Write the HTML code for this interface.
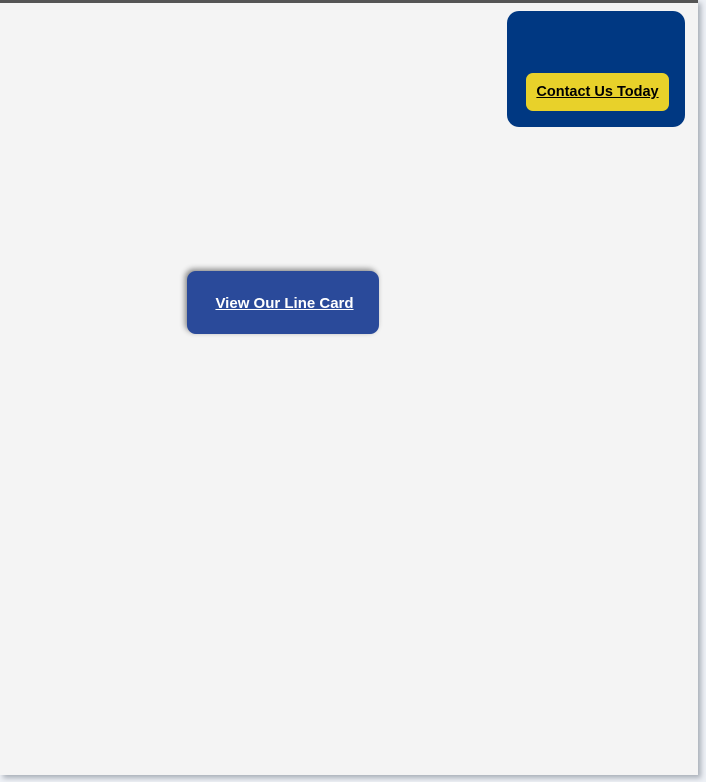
<!DOCTYPE html>
<html><head><style>
html,body{margin:0;padding:0;width:706px;height:782px;background:#eef1f6;overflow:hidden;font-family:"Liberation Sans",sans-serif}
.page{position:absolute;left:0;top:0;width:698px;height:775px;background:#f4f4f4;box-shadow:3px 3px 5px #a9afb8;border-top:3px solid #555;box-sizing:border-box}
.box{position:absolute;left:507px;top:8px;width:178px;height:116px;background:#003882;border-radius:12px}
.y{position:absolute;left:19px;top:62px;width:143px;height:38px;background:#e8d12a;border-radius:7px;text-align:center;line-height:38px;font-weight:bold;font-size:14.5px;color:#000;text-decoration:underline}
.b{position:absolute;left:187px;top:268px;width:192px;height:63px;background:#2a4a9a;border-radius:9px;box-shadow:-2px -2px 6px rgba(0,0,0,.45);color:#fff;font-weight:bold;font-size:15px;text-decoration:underline;line-height:66px;text-align:center;text-indent:3px}
</style></head><body>
<div class="page">
<div class="box"><div class="y">Contact Us Today</div></div>
<div class="b">View Our Line Card</div>
</div>
</body></html>
